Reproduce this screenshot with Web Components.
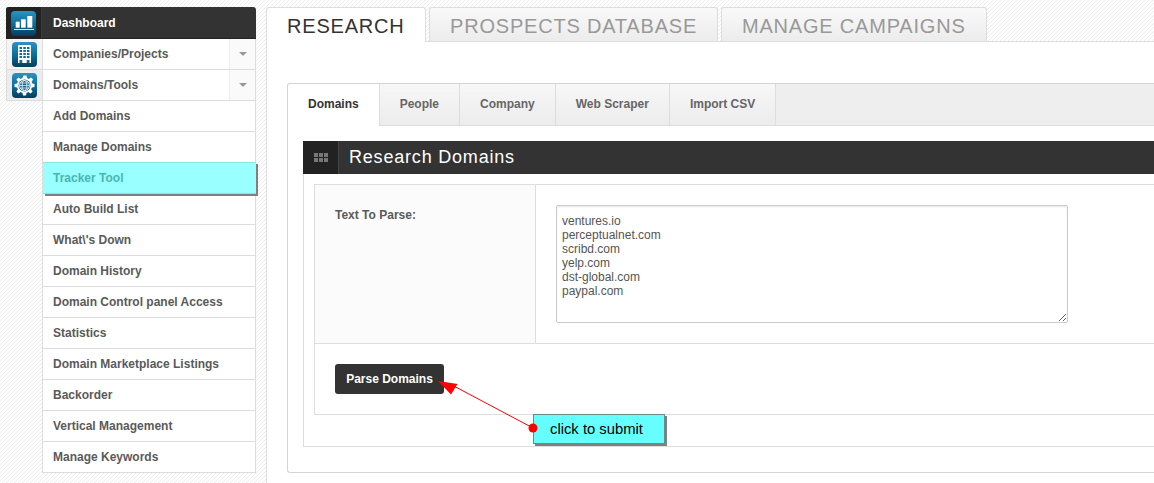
<!DOCTYPE html>
<html lang="en">
<head>
<meta charset="utf-8">
<title>Research Domains</title>
<style>
html,body{margin:0;height:483px;overflow:hidden}
body{font-family:"Liberation Sans",Arial,sans-serif;background:#fff linear-gradient(135deg,#ececec 12.5%,#fff 12.5%,#fff 50%,#ececec 50%,#ececec 62.5%,#fff 62.5%);background-size:4px 4px;display:flex;align-items:stretch;width:1154px}
</style>
</head>
<body>
<app-sidebar>
  <nav-row slot="top" kind="dark" icon="chart">Dashboard</nav-row>
  <nav-row slot="top" icon="building" caret>Companies/Projects</nav-row>
  <nav-row slot="top" icon="gear" caret>Domains/Tools</nav-row>
  <nav-row>Add Domains</nav-row>
  <nav-row>Manage Domains</nav-row>
  <nav-row kind="hl">Tracker Tool</nav-row>
  <nav-row>Auto Build List</nav-row>
  <nav-row>What\'s Down</nav-row>
  <nav-row>Domain History</nav-row>
  <nav-row>Domain Control panel Access</nav-row>
  <nav-row>Statistics</nav-row>
  <nav-row>Domain Marketplace Listings</nav-row>
  <nav-row>Backorder</nav-row>
  <nav-row>Vertical Management</nav-row>
  <nav-row>Manage Keywords</nav-row>
</app-sidebar>
<main-area>
  <main-tab slot="tabs" active style="width:160px">RESEARCH</main-tab>
  <main-tab slot="tabs" style="width:289px">PROSPECTS DATABASE</main-tab>
  <main-tab slot="tabs" style="width:266px">MANAGE CAMPAIGNS</main-tab>
  <tab-box>
    <sub-tab slot="tabs" active>Domains</sub-tab>
    <sub-tab slot="tabs">People</sub-tab>
    <sub-tab slot="tabs">Company</sub-tab>
    <sub-tab slot="tabs">Web Scraper</sub-tab>
    <sub-tab slot="tabs">Import CSV</sub-tab>
    <widget-box heading="Research Domains">
      <parse-form label="Text To Parse:" button="Parse Domains"></parse-form>
    </widget-box>
  </tab-box>
  <click-note>click to submit</click-note>
</main-area>
<script>
const ICONS={
chart:`<rect x="4.700" y="10.700" width="4" height="6" fill="#fff"/><rect x="10" y="8.300" width="4.700" height="8.400" fill="#fff"/><rect x="16.300" y="5" width="5" height="11.700" fill="#fff"/><rect x="3" y="18" width="20" height="1" fill="#cfe6f2"/>`,
building:`<path d="M6 21V4q0-1 1-1h11q1 0 1 1v17h-4.500v-3h-4v3z" fill="#fff"/>
<g fill="#0f6b96"><rect x="7.500" y="5" width="2.500" height="2"/><rect x="11.300" y="5" width="2.500" height="2"/><rect x="15" y="5" width="2.500" height="2"/><rect x="7.500" y="8" width="2.500" height="2"/><rect x="11.300" y="8" width="2.500" height="2"/><rect x="15" y="8" width="2.500" height="2"/><rect x="7.500" y="11" width="2.500" height="2"/><rect x="11.300" y="11" width="2.500" height="2"/><rect x="15" y="11" width="2.500" height="2"/><rect x="7.500" y="14" width="2.500" height="2"/><rect x="11.300" y="14" width="2.500" height="2"/><rect x="15" y="14" width="2.500" height="2"/><rect x="7.500" y="18" width="2.500" height="3"/><rect x="15" y="18" width="2.500" height="3"/></g><rect x="10.500" y="18" width="4" height="3" fill="#fff"/>`,
gear:`<g transform="translate(.5 -.5)"><path d="M11 3h3l.5 2.600 1.800.8 2.300-1.500 2 2-1.500 2.300.8 1.800L22 11.500v3l-2.600.5-.8 1.800 1.500 2.300-2 2-2.300-1.500-1.800.8L13.500 23h-3l-.5-2.600-1.800-.8-2.300 1.500-2-2 1.500-2.300-.8-1.800L2 14.500v-3l2.600-.5.8-1.800L3.900 6.900l2-2 2.300 1.500 1.800-.8z" fill="#fff"/></g>
<g transform="translate(0 -.5)"><circle cx="12.500" cy="13" r="6" fill="#0f6b96"/><circle cx="12.500" cy="13" r="5" fill="none" stroke="#fff" stroke-width=".8"/><ellipse cx="12.500" cy="13" rx="2.300" ry="5" fill="none" stroke="#fff" stroke-width=".7"/><path d="M7.500 13h10M8.300 10.500h8.400M8.300 15.500h8.400" stroke="#fff" stroke-width=".7"/></g>`
};
let gid=0;
function def(name,css,html){
  customElements.define(name,class extends HTMLElement{
    constructor(){super();const r=this.attachShadow({mode:"open"});r.innerHTML=`<style>${css}</style>`+(typeof html==="function"?html(this):html);}
  });
}
def("app-sidebar",`:host{display:block;flex:none;width:250px;margin:7px 10px 0 6px;height:466px;font:bold 12px/14px "Liberation Sans",Arial,sans-serif;color:#5a5a5a}
.list{display:block;margin-left:36px;border-left:1px solid #ddd;border-right:1px solid #ddd;background:#fff}
.top{display:block}`,`<div class="top"><slot name="top"></slot></div><div class="list"><slot></slot></div>`);
def("nav-row",`:host{display:flex;height:31px;box-sizing:border-box;background:#fff;border-bottom:1px solid #ddd}
.ic{display:none;flex:none;width:37px;box-sizing:border-box;background:#f4f4f4;border-left:1px solid #ddd;border-right:1px solid #ddd;align-items:center;justify-content:center}
:host([icon=gear]) .ic{background:#ececec}
.t{flex:1;display:flex;align-items:center;padding-left:10px;min-width:0}
.c{display:none;flex:none;width:25px;border-left:1px solid #eee;background:#fafafa;align-items:center;justify-content:center}
.c i{display:block;border:4px solid transparent;border-top-color:#999;border-bottom:0}
:host([icon]) .ic{display:flex}
:host([icon]){border-right:1px solid #ddd}
:host([caret]) .c{display:flex}
:host([kind=dark]){height:32px;background:#333;color:#fff;border:0;border-radius:3px 3px 0 0;box-shadow:inset 0 -1px 0 #222}
:host([kind=dark]) .ic{background:#222;border:0;width:36px;border-right:1px solid #3a3a3a;border-radius:3px 0 0 0}
:host([kind=dark]) .t{padding-left:11px}
:host([kind=hl]){background:#9ff;color:#4ab5b0;border-top:1px solid #7ee8e8;border-bottom:1px solid #7ee8e8;height:32px;margin-top:-1px;margin-right:-1px;box-shadow:2px 2px 0 #808080;position:relative}
`,h=>{
  const k=h.getAttribute("icon"),id="g"+(++gid);
  const svg=k?`<svg width="25" height="25" viewBox="0 0 25 25"><defs><linearGradient id="${id}" x1="0" y1="0" x2="0" y2="1"><stop offset="0" stop-color="#2a93c4"/><stop offset=".55" stop-color="#0c6a96"/><stop offset="1" stop-color="#063c5c"/></linearGradient></defs><rect width="25" height="25" rx="4" fill="url(#${id})"/>${ICONS[k]}</svg>`:"";
  return `<div class="ic">${svg}</div><div class="t"><slot></slot></div><div class="c"><i></i></div>`;
});
def("main-area",`:host{display:block;flex:none;width:960px;position:relative;font-family:"Liberation Sans",Arial,sans-serif}
.tabs{display:flex;gap:3px;padding-top:7px;height:34px;box-sizing:content-box}
.body{background:#fff;border-left:1px solid #ddd;border-top:1px solid #ddd;height:442px;box-sizing:border-box;padding:41px 0 0 20px}
`,`<div class="tabs"><slot name="tabs"></slot></div><div class="body"><slot></slot></div>`);
def("main-tab",`:host{display:block;height:34px;box-sizing:border-box;padding:0 0 0 20px;border:1px solid #ddd;border-bottom:0;border-radius:3px 3px 0 0;font-size:20px;line-height:36px;letter-spacing:.8px;color:#999;background:linear-gradient(#f9f9f9,#ececec);white-space:nowrap}
:host([active]){color:#333;background:#fff;height:35px;position:relative;z-index:1}`,`<slot></slot>`);
def("tab-box",`:host{display:block;box-sizing:border-box;height:390px;border:1px solid #d4d4d4;border-right:0;border-radius:3px 0 0 3px;background:#fff}
.bar{display:flex;height:42px;box-sizing:border-box;background:#eee;border-bottom:1px solid #ddd;border-radius:3px 0 0 0}
.c{padding:15px 0 0 15px}`,`<div class="bar"><slot name="tabs"></slot></div><div class="c"><slot></slot></div>`);
def("sub-tab",`:host{display:block;height:41px;box-sizing:border-box;padding:0 20px;border-right:1px solid #ddd;font:bold 12px/40px "Liberation Sans",Arial,sans-serif;color:#666;background:linear-gradient(#f7f7f7,#ececec);white-space:nowrap}
:host([active]){color:#333;background:#fff;height:42px;border-radius:3px 0 0 0}`,`<slot></slot>`);
def("widget-box",`:host{display:block}
.h{display:flex;height:33px;background:#333;color:#fff;align-items:center;font-size:18px;letter-spacing:.8px}
.g{flex:none;width:36px;height:33px;background:#222;border-right:1px solid #444;box-sizing:border-box;display:flex;align-items:center;justify-content:center}
.tt{padding-left:10px}
.b{border:1px solid #ddd;border-top:0;border-right:0;padding:10px 0 31px 10px;height:231px;box-sizing:content-box}`,
h=>`<div class="h"><div class="g"><svg width="14" height="10" viewBox="0 0 14 10"><g fill="#777"><rect width="4" height="4"/><rect x="5" width="4" height="4"/><rect x="10" width="4" height="4"/><rect y="5" width="4" height="4"/><rect x="5" y="5" width="4" height="4"/><rect x="10" y="5" width="4" height="4"/></g></svg></div><div class="tt">${h.getAttribute("heading")}</div></div><div class="b"><slot></slot></div>`);
def("parse-form",`:host{display:block;border:1px solid #ddd;border-right:0;font:bold 12px/14px "Liberation Sans",Arial,sans-serif;color:#5a5a5a;height:231px;box-sizing:border-box}
.r{display:flex;height:159px;box-sizing:border-box;border-bottom:1px solid #ddd}
.l{flex:none;width:221px;box-sizing:border-box;background:#fbfbfb;border-right:1px solid #ddd;padding:23px 0 0 20px}
.f{padding:20px 0 0 20px}
textarea{display:block;width:512px;height:118px;box-sizing:border-box;margin:0;padding:8px 5px;border:1px solid #ccc;border-radius:2px;box-shadow:inset 0 1px 2px rgba(0,0,0,.1);font:12px/14px "Liberation Sans",Arial,sans-serif;color:#555;background:#fff;outline:0}
.a{padding:20px 0 0 20px}
button{display:block;width:109px;height:30px;border:0;border-radius:3px;background:#333;color:#fff;font:bold 12px/30px "Liberation Sans",Arial,sans-serif;padding:0}`,
h=>`<div class="r"><div class="l">${h.getAttribute("label")}</div><div class="f"><textarea spellcheck="false">ventures.io
perceptualnet.com
scribd.com
yelp.com
dst-global.com
paypal.com</textarea></div></div><div class="a"><button>${h.getAttribute("button")}</button></div>`);
def("click-note",`:host{display:block;position:absolute;left:170px;top:377px;width:300px;height:80px;pointer-events:none}
svg{position:absolute;left:0;top:0}
.n{position:absolute;left:97px;top:37px;width:132px;height:30px;box-sizing:border-box;background:#6ff;border:1px solid #6b8a8a;box-shadow:2px 2px 0 #808080;font:14.8px/28px "Liberation Sans",Arial,sans-serif;color:#000;padding-left:16px;white-space:nowrap}`,
`<svg width="300" height="80" viewBox="0 0 300 80"><line x1="97" y1="51" x2="14" y2="7" stroke="#f00" stroke-width="1"/><polygon points="2,4 21.500,7 15,17.500" fill="#f00"/></svg>
<div class="n"><slot></slot></div>
<svg width="300" height="80" viewBox="0 0 300 80"><circle cx="97" cy="51" r="4.500" fill="#f00"/></svg>`);
</script>
</body>
</html>
